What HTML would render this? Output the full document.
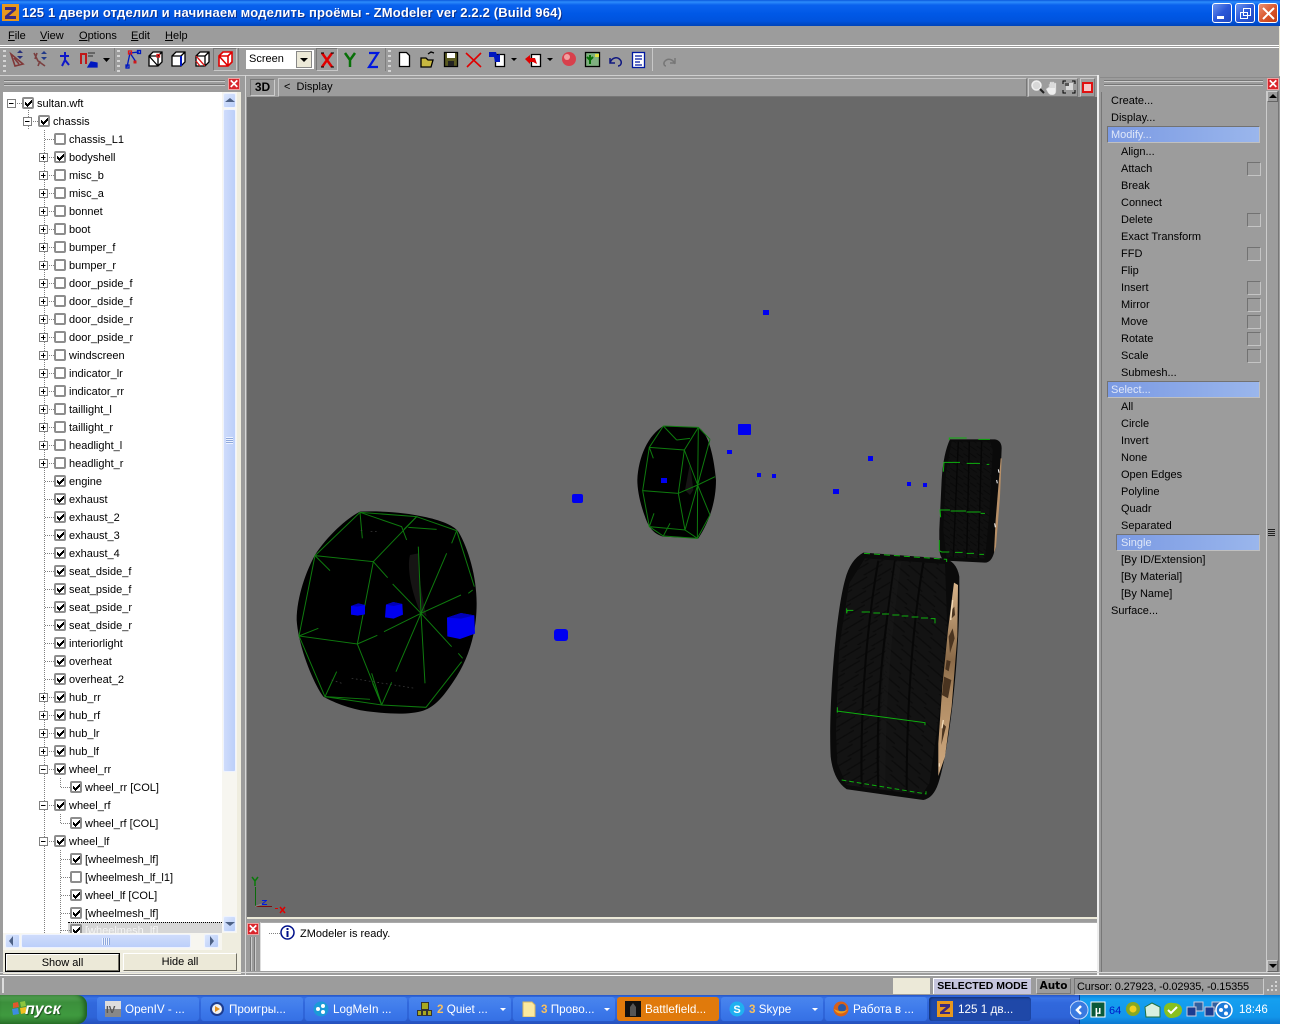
<!DOCTYPE html>
<html><head><meta charset="utf-8"><title>ZModeler</title>
<style>
html,body{margin:0;padding:0;background:#fff}
body{width:1296px;height:1024px;position:relative;overflow:hidden;font:11px "Liberation Sans","Noto Sans CJK SC",sans-serif;color:#000}
.a,.a *{box-sizing:border-box}
.a{position:absolute}
.t{position:absolute;white-space:nowrap}
#win{left:0;top:0;width:1280px;height:995px;background:#9c9c9c;overflow:hidden}
#title{left:0;top:0;width:1280px;height:26px;background:linear-gradient(#0a58dc 0,#2d8cfb 2px,#0a62ee 5px,#0058e6 14px,#0053dd 21px,#0043b8 26px)}
#title .t{left:22px;top:5px;font:bold 13px "Liberation Sans",sans-serif;letter-spacing:.16px;color:#fff;text-shadow:1px 1px 0 #0a2f8c}
.wb{position:absolute;top:3px;width:20px;height:20px;border:1px solid #fff;border-radius:3px;background:linear-gradient(135deg,#6d94ee,#2c58d8 50%,#2048c0)}
.m{position:absolute;top:30px;font-size:11px}
.m u{text-decoration:underline}
.hl{position:absolute;background:#fff;height:1px;left:0;width:1280px}
.sep{position:absolute;width:1px;background:#c8c8c8}
.grip{position:absolute;width:3px;background:repeating-linear-gradient(#d4d4d4 0 2px,transparent 2px 5px)}
#tree{left:3px;top:92px;width:219px;height:841px;background:#fff;overflow:hidden;padding-top:2px}
.r{position:relative;height:18px;line-height:20px;margin-left:-3px;--x:60px;padding-left:calc(var(--x) + 9px);white-space:nowrap}
.l0{--x:28px}.l1{--x:44px}.l3{--x:76px}
.r s{position:absolute;left:calc(var(--x) - 15px);top:9px;width:10px;height:1px;background:repeating-linear-gradient(90deg,#808080 0 1px,transparent 1px 2px)}
.r b{position:absolute;left:calc(var(--x) - 6px);top:3px;width:12px;height:12px;border:2px solid #8d8d8d;border-radius:2px;background:#fff}
.r b.y::after{content:"";position:absolute;left:0;top:0;width:1px;height:1px;color:#000;box-shadow:1px 3px,1px 4px,1px 5px,2px 4px,2px 5px,2px 6px,3px 5px,3px 6px,3px 7px,4px 4px,4px 5px,4px 6px,5px 3px,5px 4px,5px 5px,6px 2px,6px 3px,6px 4px,7px 1px,7px 2px,7px 3px}
.r i{position:absolute;left:calc(var(--x) - 21px);top:5px;width:9px;height:9px;border:1px solid #808080;background:linear-gradient(#000,#000) center/5px 1px no-repeat,#fff}
.r i.p{background:linear-gradient(#000,#000) center/5px 1px no-repeat,linear-gradient(#000,#000) center/1px 5px no-repeat,#fff}
.v{position:absolute;width:1px;background:repeating-linear-gradient(#808080 0 1px,transparent 1px 2px)}
.sb{position:absolute;background:linear-gradient(135deg,#dbe6fd,#b6cbf8);border:1px solid #eef3ff;border-radius:2px}
.btn{position:absolute;background:#ece9d8;border:1px solid #fff;border-right-color:#716f64;border-bottom-color:#716f64;text-align:center;font-size:11px;line-height:16px}
.it{position:absolute;height:17px;line-height:19px;white-space:nowrap;font-size:11px}
.band{position:absolute;height:17px;line-height:17px;color:#dfe7f8;background:linear-gradient(90deg,#7b9ae3,#9ab6ec);border:1px solid;border-color:#727272 #c0c0c0 #c0c0c0 #727272;white-space:nowrap;font-size:11px}
.cb{position:absolute;left:1247px;width:14px;height:14px;border:1px solid;border-color:#727272 #c4c4c4 #c4c4c4 #727272}
.rx{position:absolute;width:12px;height:12px;background:#d9252c;border:1px solid #f0a0a0;color:#fff;font:bold 12px/10px "Liberation Sans",sans-serif;text-align:center}
.box{position:absolute;border:1px solid;border-color:#c8c8c8 #777 #777 #c8c8c8}
#bar{left:0;top:995px;width:1280px;height:29px;background:linear-gradient(#2456c8 0,#3a74e6 3px,#3168dc 8px,#2e64d8 22px,#2550bc 29px)}
.tb{position:absolute;top:2px;height:24px;width:102px;background:linear-gradient(#4a86ee,#3c78ea 60%,#3570e4);border-radius:3px;color:#fff;font-size:11.7px;line-height:26px;white-space:nowrap}
.tb span{position:absolute;left:28px;top:0}
.tb em{font-style:normal;color:#f7c060;font-weight:bold}
.tb svg{position:absolute;left:8px;top:4px}
.dd{position:absolute;right:5px;top:11px;width:0;height:0;border:3px solid transparent;border-top:3px solid #fff;border-bottom:0}
svg{display:block}
</style></head><body>
<div id="win" class="a">
 <div id="title" class="a">
  <svg class="a" style="left:2px;top:4px" width="17" height="17"><rect width="17" height="17" fill="#e8981e"/><path d="M3 3h11v3L7 12h7v3H3v-3l7-6H3z" fill="#3a2a80"/></svg>
  <div class="t">125 1 двери отделил и начинаем моделить проёмы - ZModeler ver 2.2.2 (Build 964)</div>
  <div class="wb" style="left:1212px"><div class="a" style="left:4px;top:12px;width:7px;height:3px;background:#fff"></div></div>
  <div class="wb" style="left:1235px"><svg class="a" style="left:3px;top:3px" width="13" height="13" fill="none" stroke="#fff"><path d="M4.5 1.5h7v7h-7zM1.5 5.500h7v6h-7z"/></svg></div>
  <div class="wb" style="left:1258px;background:linear-gradient(135deg,#eb9072,#d8542a 55%,#bf3c14)"><svg class="a" style="left:3px;top:3px" width="13" height="13" stroke="#fff" stroke-width="2"><path d="M1 1l11 11M12 1L1 12"/></svg></div>
 </div>
 <div class="m" style="left:8px"><u>F</u>ile</div>
 <div class="m" style="left:40px"><u>V</u>iew</div>
 <div class="m" style="left:79px"><u>O</u>ptions</div>
 <div class="m" style="left:131px"><u>E</u>dit</div>
 <div class="m" style="left:165px"><u>H</u>elp</div>
 <div class="hl" style="top:45px"></div><div class="hl" style="top:47px"></div>
 <div class="grip" style="left:3px;top:50px;height:22px"></div>
 <div class="sep" style="left:114px;top:48px;height:23px;background:#7e7e7e"></div>
 <div class="grip" style="left:117px;top:50px;height:22px"></div>
 <div class="sep" style="left:238px;top:48px;height:23px;background:#7e7e7e"></div>
 <div class="sep" style="left:385px;top:48px;height:23px;background:#7e7e7e"></div>
 <div class="grip" style="left:388px;top:50px;height:22px"></div>
 <div class="sep" style="left:652px;top:48px;height:23px"></div>
 <div class="box" style="left:213px;top:48px;width:24px;height:23px;border-color:#777 #c8c8c8 #c8c8c8 #777"></div>
 <div class="box" style="left:316px;top:48px;width:22px;height:23px;border-color:#777 #c8c8c8 #c8c8c8 #777"></div>
 <div class="a" style="left:246px;top:50px;width:68px;height:19px;background:#fff"><div class="t" style="left:3px;top:3px;font-size:11px">Screen</div><div class="a" style="left:50px;top:1px;width:16px;height:17px;background:#ece9d8;border:1px solid #888"><div class="a" style="left:3px;top:6px;border:4px solid transparent;border-top:4px solid #000;border-bottom:0"></div></div></div>
 <svg class="a" style="left:0;top:46px" width="700" height="28">
  <g fill="none" stroke-width="1.300">
   <path d="M11 8l4 12 8-2zM14 12l5 6" stroke="#803838" stroke-width="1.600"/><path d="M17 7l3-3 3 3zM17 10l3 3 3-3z" fill="#28307a" stroke="none"/>
   <path d="M34 7l4 8 7 5M37 7l-2 6M40 15l-2 5" stroke="#7a4040" stroke-width="1.600"/><path d="M41 8l3-3 3 3zM41 11l3 3 3-3z" fill="#223a88" stroke="none"/>
   <path d="M65 6v8M65 14l-3 6M65 14l4 5M60 10h9" stroke="#1018c8" stroke-width="2"/>
   <path d="M81 7v11M86 7v11M80 8h6" stroke="#c01818" stroke-width="2"/><path d="M88 21l3-5 6 1v4z" fill="#0018c0" stroke="#0018c0"/><path d="M88 7h7M88 10h5" stroke="#444"/>
   <path d="M103 12h7l-3.500 4z" fill="#000" stroke="none"/>
   <path d="M127 21l3-14 9-1M130 7l6 9" stroke="#0018c0"/><rect x="126" y="19" width="3" height="3" stroke="#0018c0"/><rect x="128.500" y="5" width="3" height="3" stroke="#e01818"/><rect x="137.500" y="4.500" width="3" height="3" stroke="#0018c0"/><rect x="133.500" y="14.500" width="3" height="3" fill="#d01818" stroke="none"/>
   <g stroke="#000" fill="#fff"><path d="M149 10l4-4h9v10l-4 4h-9zM149 10h9v10M158 10l4-4M149 10l9 10"/></g><rect x="157" y="8.500" width="2.500" height="2.500" stroke="#e01818"/>
   <g stroke="#000" fill="#fff"><path d="M172 10l4-4h9v10l-4 4h-9zM172 10h9v10M181 10l4-4M181 10v10"/></g><path d="M181 10v10" stroke="#0018c0" stroke-width="2"/>
   <g stroke="#000" fill="#fff"><path d="M196 10l4-4h9v10l-4 4h-9zM196 10h9v10M205 10l4-4"/></g><path d="M196 10l9 10" stroke="#e01818"/><path d="M198 12l5 6M196 15l4 5" stroke="#e01818"/>
   <g stroke="#e00000" stroke-width="1.600" fill="#fff"><path d="M219 10l4-4h9v10l-4 4h-9zM219 10h9v10M228 10l4-4M219 10l9 10"/></g>
   <path d="M322 7l10 14M332 7l-10 14" stroke="#e00000" stroke-width="2.500"/><path d="M321 7h3M331 7h3M321 21h3M331 21h3" stroke="#000" stroke-width="1"/>
   <path d="M345 7l5 7 5-7M350 14v7" stroke="#087008" stroke-width="2.500"/>
   <path d="M369 7h9l-9 14h9" stroke="#0018e0" stroke-width="2.200"/>
   <path d="M399.500 6.500h7l3 3v11h-10z" fill="#fff" stroke="#000"/>
   <path d="M421 12h5l2 2h5l-2 7h-10z" fill="#c8b840" stroke="#000"/><path d="M428 8l3-2 3 1" stroke="#000"/>
   <rect x="444.500" y="6.500" width="13" height="14" fill="#5a5a20" stroke="#000"/><rect x="447" y="7" width="8" height="5" fill="#fff"/><rect x="448" y="15" width="6" height="5" fill="#222"/>
   <path d="M466 7l15 14M481 7l-14 14" stroke="#e00000" stroke-width="1.600"/>
   <path d="M495.500 8.500h9v12h-9z" fill="#fff" stroke="#000"/><path d="M489 6h7l1 3 3-1v8h-5l-1-5h-5z" fill="#0018c0"/>
   <path d="M531.500 8.500h9v12h-9z" fill="#fff" stroke="#000"/><path d="M525 13l5-4v3h5l2 6-4-2h-3v2z" fill="#e00000"/>
   <path d="M511 12h6l-3 3zM547 12h6l-3 3z" fill="#000" stroke="none"/>
   <circle cx="569" cy="13" r="7" fill="#d8404c" stroke="none"/><circle cx="567" cy="11" r="3" fill="#f0a0a0" stroke="none"/>
   <rect x="585.500" y="6.500" width="14" height="14" fill="#80b080" stroke="#000"/><path d="M590 18v-9M587 11l3 3 3-3" stroke="#087008" stroke-width="2"/><rect x="595" y="8" width="4" height="3" fill="#e0e040" stroke="none"/>
   <path d="M610 17c2-6 8-7 11-2 1 3-1 5-3 5M610 12v5h5" stroke="#101880" stroke-width="1.500"/>
   <rect x="632.500" y="6.500" width="12" height="15" fill="#fff" stroke="#0018a0"/><path d="M635 10h7M635 13h7M635 16h5M635 19h7" stroke="#0018a0"/>
   <path d="M675 18c-2-5-7-6-10-3-2 2-1 5 1 5M675 12v5h-5" stroke="#777" stroke-width="1.500"/>
  </g>
 </svg>
 <div class="hl" style="top:75px;width:1097px;background:#cfcfcf"></div>
 <div class="hl" style="top:77px;left:1100px;width:180px;background:#8a8a8a"></div>

 <!-- left panel -->
 <div class="a" style="left:4px;top:80px;width:221px;height:1px;background:#777;box-shadow:0 1px #ccc,0 4px #777,0 5px #ccc"></div>
 <div class="rx" style="left:228px;top:78px">✕</div>
 <div class="a" style="left:0;top:92px;width:241px;height:882px;background:#efeddf"></div>
 <div class="a" style="left:0;top:92px;width:3px;height:882px;background:#9c9c9c"></div>
 <div id="tree" class="a">
  <div class="v" style="left:25px;top:16px;height:22px"></div>
  <div class="v" style="left:41px;top:38px;height:803px"></div>
  <div class="v" style="left:57px;top:686px;height:10px"></div>
  <div class="v" style="left:57px;top:722px;height:10px"></div>
  <div class="v" style="left:57px;top:758px;height:83px"></div>
  <div class="r l0"><i></i><s></s><b class="y"></b>sultan.wft</div>
  <div class="r l1"><i></i><s></s><b class="y"></b>chassis</div>
  <div class="r"><s></s><b></b>chassis_L1</div>
  <div class="r"><i class="p"></i><s></s><b class="y"></b>bodyshell</div>
  <div class="r"><i class="p"></i><s></s><b></b>misc_b</div>
  <div class="r"><i class="p"></i><s></s><b></b>misc_a</div>
  <div class="r"><i class="p"></i><s></s><b></b>bonnet</div>
  <div class="r"><i class="p"></i><s></s><b></b>boot</div>
  <div class="r"><i class="p"></i><s></s><b></b>bumper_f</div>
  <div class="r"><i class="p"></i><s></s><b></b>bumper_r</div>
  <div class="r"><i class="p"></i><s></s><b></b>door_pside_f</div>
  <div class="r"><i class="p"></i><s></s><b></b>door_dside_f</div>
  <div class="r"><i class="p"></i><s></s><b></b>door_dside_r</div>
  <div class="r"><i class="p"></i><s></s><b></b>door_pside_r</div>
  <div class="r"><i class="p"></i><s></s><b></b>windscreen</div>
  <div class="r"><i class="p"></i><s></s><b></b>indicator_lr</div>
  <div class="r"><i class="p"></i><s></s><b></b>indicator_rr</div>
  <div class="r"><i class="p"></i><s></s><b></b>taillight_l</div>
  <div class="r"><i class="p"></i><s></s><b></b>taillight_r</div>
  <div class="r"><i class="p"></i><s></s><b></b>headlight_l</div>
  <div class="r"><i class="p"></i><s></s><b></b>headlight_r</div>
  <div class="r"><s></s><b class="y"></b>engine</div>
  <div class="r"><s></s><b class="y"></b>exhaust</div>
  <div class="r"><s></s><b class="y"></b>exhaust_2</div>
  <div class="r"><s></s><b class="y"></b>exhaust_3</div>
  <div class="r"><s></s><b class="y"></b>exhaust_4</div>
  <div class="r"><s></s><b class="y"></b>seat_dside_f</div>
  <div class="r"><s></s><b class="y"></b>seat_pside_f</div>
  <div class="r"><s></s><b class="y"></b>seat_pside_r</div>
  <div class="r"><s></s><b class="y"></b>seat_dside_r</div>
  <div class="r"><s></s><b class="y"></b>interiorlight</div>
  <div class="r"><s></s><b class="y"></b>overheat</div>
  <div class="r"><s></s><b class="y"></b>overheat_2</div>
  <div class="r"><i class="p"></i><s></s><b class="y"></b>hub_rr</div>
  <div class="r"><i class="p"></i><s></s><b class="y"></b>hub_rf</div>
  <div class="r"><i class="p"></i><s></s><b class="y"></b>hub_lr</div>
  <div class="r"><i class="p"></i><s></s><b class="y"></b>hub_lf</div>
  <div class="r"><i></i><s></s><b class="y"></b>wheel_rr</div>
  <div class="r l3"><s></s><b class="y"></b>wheel_rr [COL]</div>
  <div class="r"><i></i><s></s><b class="y"></b>wheel_rf</div>
  <div class="r l3"><s></s><b class="y"></b>wheel_rf [COL]</div>
  <div class="r"><i></i><s></s><b class="y"></b>wheel_lf</div>
  <div class="r l3"><s></s><b class="y"></b>[wheelmesh_lf]</div>
  <div class="r l3"><s></s><b></b>[wheelmesh_lf_l1]</div>
  <div class="r l3"><s></s><b class="y"></b>wheel_lf [COL]</div>
  <div class="r l3"><s></s><b class="y"></b>[wheelmesh_lf]</div>
  <div class="a" style="left:65px;top:830px;width:154px;height:12px;background:#d6d6d6;border-top:1px dotted #000"></div>
  <div class="r l3" style="position:absolute;top:829px;left:0;color:#f4f4f4"><s></s><b class="y"></b>[wheelmesh_lf]</div>
 </div>
 <div class="a" style="left:222px;top:92px;width:15px;height:841px;background:#f7f6f0"></div>
 <div class="sb" style="left:223px;top:93px;width:13px;height:15px"><div class="a" style="left:1px;top:4px;border:5px solid transparent;border-bottom:4px solid #4d6185;border-top:0"></div></div>
 <div class="sb" style="left:223px;top:109px;width:13px;height:663px;background:linear-gradient(90deg,#cfdcfb,#bccffa)"><div class="a" style="left:2px;top:327px;width:7px;height:7px;background:repeating-linear-gradient(#eef3ff 0 1px,#8ea8dc 1px 2px)"></div></div>
 <div class="sb" style="left:223px;top:916px;width:13px;height:16px"><div class="a" style="left:1px;top:5px;border:5px solid transparent;border-top:4px solid #4d6185;border-bottom:0"></div></div>
 <div class="a" style="left:3px;top:933px;width:219px;height:17px;background:#f7f6f0"></div>
 <div class="sb" style="left:5px;top:934px;width:15px;height:14px"><div class="a" style="left:3px;top:1px;border:5px solid transparent;border-right:4px solid #4d6185;border-left:0"></div></div>
 <div class="sb" style="left:21px;top:934px;width:170px;height:14px;background:linear-gradient(#cfdcfb,#bccffa)"><div class="a" style="left:80px;top:3px;width:8px;height:7px;background:repeating-linear-gradient(90deg,#eef3ff 0 1px,#8ea8dc 1px 2px)"></div></div>
 <div class="sb" style="left:204px;top:934px;width:15px;height:14px"><div class="a" style="left:5px;top:1px;border:5px solid transparent;border-left:4px solid #4d6185;border-right:0"></div></div>
 <div class="btn" style="left:6px;width:113px;top:954px;height:17px;outline:1px solid #000">Show all</div>
 <div class="btn" style="left:123px;width:114px;top:953px;height:18px;line-height:17px">Hide all</div>

 <!-- viewport header -->
 <div class="a" style="left:245px;top:75px;width:1px;height:900px;background:#d8d8d8"></div>
 <div class="box" style="left:250px;top:79px;width:25px;height:17px;border-color:#777 #ccc #ccc #777;font:bold 12px/15px 'Liberation Sans',sans-serif;text-align:center">3D</div>
 <div class="box" style="left:278px;top:78px;width:749px;height:19px"><div class="t" style="left:5px;top:2px;font-size:11px">&lt;&nbsp; Display</div></div>
 <div class="box" style="left:1028px;top:78px;width:50px;height:19px"></div>
 <div class="box" style="left:1080px;top:78px;width:15px;height:19px"><div class="a" style="left:1px;top:3px;width:11px;height:11px;background:#f4c8c8;border:2px solid #e01010"></div></div>
 <svg class="a" style="left:1030px;top:79px" width="46" height="16"><circle cx="6.500" cy="6.500" r="4.500" fill="#d8d8d8" stroke="#f0f0f0" stroke-width="1.500"/><path d="M10 10l4 4" stroke="#222" stroke-width="2"/><path d="M19 8v-3h1v4-6h2v6-6h2v6-5h2v8c0 3-2 4-4 4-3 0-4-2-6-6z" fill="#eee" stroke="#bbb" stroke-width=".5"/><path d="M33 5V2h3M45 5V2h-3M33 11v3h3M45 11v3h-3" stroke="#000" fill="none"/><rect x="36" y="4" width="7" height="7" fill="#d8d8d8"/><rect x="35" y="4" width="4" height="3" fill="#555"/></svg>
 <div class="a" style="left:247px;top:97px;width:850px;height:820px;background:#696969"></div>
 <div class="a" style="left:1097px;top:75px;width:2px;height:900px;background:#eee"></div>
 <div class="a" style="left:247px;top:917px;width:850px;height:2px;background:#ece9d8"></div>

 <!-- message panel -->
 <div class="rx" style="left:247px;top:923px">✕</div>
 <div class="a" style="left:250px;top:937px;width:1px;height:34px;background:#777;box-shadow:1px 0 #ccc,4px 0 #777,5px 0 #ccc"></div>
 <div class="a" style="left:260px;top:922px;width:837px;height:49px;background:#fff;border-top:1px solid #aaa;border-left:1px solid #ddd"></div>
 <div class="a" style="left:269px;top:933px;width:11px;height:1px;background:repeating-linear-gradient(90deg,#808080 0 1px,transparent 1px 2px)"></div>
 <svg class="a" style="left:280px;top:925px" width="15" height="15"><circle cx="7.500" cy="7.500" r="6.500" fill="#fff" stroke="#00108a" stroke-width="1.500"/><path d="M6.500 3h2v2h-2zM6.500 6h2v6h-2z" fill="#00108a"/></svg>
 <div class="t" style="left:300px;top:928px">ZModeler is ready.</div>
 <div class="hl" style="top:972px;background:#d8d8d8;width:1280px"></div><div class="hl" style="top:975px;width:1280px"></div>
 <div class="a" style="left:1279px;top:26px;width:1px;height:50px;background:#ece9d8"></div>

 <!-- right panel -->
 <div class="a" style="left:1104px;top:80px;width:159px;height:1px;background:#777;box-shadow:0 1px #ccc,0 4px #777,0 5px #ccc"></div>
 <div class="rx" style="left:1267px;top:78px">✕</div>
 <div class="a" style="left:1101px;top:92px;width:1px;height:880px;background:#777"></div>
 <div class="a" style="left:1266px;top:91px;width:1px;height:881px;background:#ccc"></div>
 <div class="a" style="left:1278px;top:91px;width:1px;height:881px;background:#777"></div>
 <div class="box" style="left:1267px;top:91px;width:11px;height:11px;border-color:#ccc #666 #666 #ccc"><div class="a" style="left:1px;top:2px;border:4px solid transparent;border-bottom:4px solid #000;border-top:0"></div></div>
 <div class="a" style="left:1268px;top:529px;width:7px;height:7px;background:repeating-linear-gradient(#222 0 1px,transparent 1px 2px)"></div>
 <div class="box" style="left:1267px;top:960px;width:11px;height:12px;border-color:#ccc #666 #666 #ccc"><div class="a" style="left:1px;top:3px;border:4px solid transparent;border-top:4px solid #000;border-bottom:0"></div></div>
 <div class="it" style="left:1111px;top:92px">Create...</div>
 <div class="it" style="left:1111px;top:109px">Display...</div>
 <div class="band" style="left:1107px;top:126px;width:153px;padding-left:3px">Modify...</div>
 <div class="it" style="left:1121px;top:143px">Align...</div>
 <div class="it" style="left:1121px;top:160px">Attach</div><div class="cb" style="top:162px"></div>
 <div class="it" style="left:1121px;top:177px">Break</div>
 <div class="it" style="left:1121px;top:194px">Connect</div>
 <div class="it" style="left:1121px;top:211px">Delete</div><div class="cb" style="top:213px"></div>
 <div class="it" style="left:1121px;top:228px">Exact Transform</div>
 <div class="it" style="left:1121px;top:245px">FFD</div><div class="cb" style="top:247px"></div>
 <div class="it" style="left:1121px;top:262px">Flip</div>
 <div class="it" style="left:1121px;top:279px">Insert</div><div class="cb" style="top:281px"></div>
 <div class="it" style="left:1121px;top:296px">Mirror</div><div class="cb" style="top:298px"></div>
 <div class="it" style="left:1121px;top:313px">Move</div><div class="cb" style="top:315px"></div>
 <div class="it" style="left:1121px;top:330px">Rotate</div><div class="cb" style="top:332px"></div>
 <div class="it" style="left:1121px;top:347px">Scale</div><div class="cb" style="top:349px"></div>
 <div class="it" style="left:1121px;top:364px">Submesh...</div>
 <div class="band" style="left:1107px;top:381px;width:153px;padding-left:3px">Select...</div>
 <div class="it" style="left:1121px;top:398px">All</div>
 <div class="it" style="left:1121px;top:415px">Circle</div>
 <div class="it" style="left:1121px;top:432px">Invert</div>
 <div class="it" style="left:1121px;top:449px">None</div>
 <div class="it" style="left:1121px;top:466px">Open Edges</div>
 <div class="it" style="left:1121px;top:483px">Polyline</div>
 <div class="it" style="left:1121px;top:500px">Quadr</div>
 <div class="it" style="left:1121px;top:517px">Separated</div>
 <div class="band" style="left:1116px;top:534px;width:144px;padding-left:4px">Single</div>
 <div class="it" style="left:1121px;top:551px">[By ID/Extension]</div>
 <div class="it" style="left:1121px;top:568px">[By Material]</div>
 <div class="it" style="left:1121px;top:585px">[By Name]</div>
 <div class="it" style="left:1111px;top:602px">Surface...</div>

 <!-- status -->
 <div class="a" style="left:2px;top:978px;width:2px;height:15px;background:#ddd"></div>
 <div class="a" style="left:893px;top:978px;width:37px;height:16px;background:#ece9d8"></div>
 <div class="a" style="left:933px;top:978px;width:98px;height:16px;background:#c6c6de;border-left:1px solid #fff;border-top:1px solid #fff;text-align:center;font:bold 10.5px/15px 'Liberation Sans',sans-serif;white-space:nowrap">SELECTED MODE</div>
 <div class="a" style="left:1036px;top:978px;width:35px;height:16px;border:1px solid;border-color:#ccc #777 #777 #ccc;text-align:center;font:bold 10.5px/14px 'DejaVu Sans',sans-serif">Auto</div>
 <div class="a" style="left:1074px;top:978px;width:190px;height:17px;border:1px solid;border-color:#777 #ccc #ccc #777;font-size:11px;letter-spacing:-.17px;line-height:16px;padding-left:2px;white-space:nowrap">Cursor: 0.27923, -0.02935, -0.15355</div>
 <svg class="a" style="left:1264px;top:978px" width="16" height="17" fill="#d4d4d4"><path d="M11 3h2v2h-2zM7 7h2v2H7zM11 7h2v2h-2zM3 11h2v2H3zM7 11h2v2H7zM11 11h2v2h-2z"/></svg>
</div>

<!-- 3D scene -->
<svg class="a" style="left:0;top:0" width="1280" height="995" viewBox="0 0 1280 995">
 <defs>
  <pattern id="tr" width="42" height="42" patternUnits="userSpaceOnUse" patternTransform="rotate(5)"><rect width="42" height="42" fill="#131313"/><path d="M0 4l42 30M0-26l42 30" stroke="#0b0b0b" stroke-width="4"/></pattern>
  <pattern id="tl" width="42" height="42" patternUnits="userSpaceOnUse" patternTransform="rotate(5)"><rect width="42" height="42" fill="#131313"/><path d="M0 34L42 4M0 64L42 34" stroke="#0b0b0b" stroke-width="4"/></pattern>
  <pattern id="ts" width="20" height="22" patternUnits="userSpaceOnUse"><rect width="20" height="22" fill="#101010"/><path d="M0 4l20 14" stroke="#090909" stroke-width="3"/></pattern>
  <linearGradient id="rim" x1="0" x2="0" y1="0" y2="1"><stop offset="0" stop-color="#d8b48a"/><stop offset=".4" stop-color="#8a6a48"/><stop offset=".6" stop-color="#b08c64"/><stop offset="1" stop-color="#d0aa80"/></linearGradient>
 </defs>
 <!-- left wheel -->
 <g transform="translate(280 490) scale(.3333)">
  <path d="M240 65C300 62 380 68 430 80C480 90 520 105 535 125C565 175 590 260 590 340C590 430 565 510 520 575C490 620 465 650 430 662C390 675 330 672 270 665C220 660 165 640 130 620C100 580 55 470 50 390C50 320 80 240 105 195C140 140 200 85 240 65Z" fill="#000"/>
  <path d="M390 195c-10 40 5 110 30 170l20 15c-15-60-25-130-25-190z" fill="#161414"/>
  <g fill="none" stroke="#0e7a0e" stroke-width="3">
   <path d="M105 197L280 215 232 462 57 438 105 197 240 67 410 80 280 215M410 80L530 122 583 290M232 462L305 645 135 620 57 438M305 645L438 652 545 515M578 300L565 310M535 490L548 505"/>
   <path d="M415 170L423 370 435 580M500 190L423 370 348 545M543 315L423 370 312 425M292 436L232 462M338 282L423 370 515 470M280 215L323 263M135 620L170 545M57 438L115 415M105 197L150 242M240 67L247 145M240 67L365 110 380 150M372 118L410 80M530 122L515 160M305 645L335 577M305 645L275 550M135 620L270 628M305 645L278 580M385 112L470 118"/>
  </g>
  <path d="M242 122h10M272 124h18M155 570l30 10M215 565l190 30" stroke="#444" stroke-width="2" stroke-dasharray="5 8"/>
  <path d="M213 348l22-8 20 5v28l-22 4-20-3z" fill="#0000f0"/><path d="M213 348l22-8 20 5-22 5z" fill="#0000b8"/>
  <path d="M318 344l22-8 27 6 2 32-28 12-26-4z" fill="#0000f0"/><path d="M318 344l22-8 27 6-26 6z" fill="#0000b8"/>
  <path d="M501 383l42-14 40 7 2 55-45 16-38-8z" fill="#0000f0"/><path d="M501 383l42-14 40 7-40 10z" fill="#0000b8"/>
 </g>
 <!-- middle wheel -->
 <g transform="translate(620 410) scale(.3333)">
  <path d="M130 48L235 52C260 65 280 120 288 210C288 280 265 340 235 385L130 380C100 372 85 350 75 320C60 280 52 240 52 210C55 140 85 75 130 48Z" fill="#000"/>
  <path d="M210 160l-15 80 15 15 10-15z" fill="#161414"/>
  <g fill="none" stroke="#0e7a0e" stroke-width="3">
   <path d="M130 48L235 52 270 88M88 112L193 120 175 250 68 242 88 112 130 48M193 120L235 52M175 250L195 360 88 350 68 242M195 360L232 385 270 315M88 350L130 378 232 385"/>
   <path d="M235 52L233 225 232 385M270 88L233 225 270 315M285 200L233 225 175 250M193 120L233 225 195 360M130 48L170 90M88 112L100 145M88 350L102 310M130 378L150 340M170 90L210 85"/>
  </g>
  <rect x="123" y="204" width="18" height="15" fill="#0000f0"/>
 </g>
 <!-- right wheels -->
 <g transform="translate(810 430) scale(.3333)">
  <path d="M420 28L555 28Q575 32 575 55L572 130 560 280 553 365Q545 398 525 398L405 392Q388 385 388 350L388 300 395 150Q400 70 420 28Z" fill="#0a0a0a"/>
  <path d="M425 35L540 35 548 60 538 250 525 385 410 382 400 300 408 130z" fill="url(#ts)"/>
  <path d="M445 35L430 382M478 35L470 385M515 35L505 385" stroke="#060606" stroke-width="4" fill="none"/>
  <path d="M572 85L575 85 570 200 558 350 552 368 557 270z" fill="#b89068"/><path d="M565 118l2 10M560 150l2 10M554 280l2 12" stroke="#fff" stroke-width="3"/>
  <g fill="none" stroke="#0eb00e" stroke-width="3">
   <path d="M418 30V24H470M505 28H540M400 125L402 97H450M470 100H510M530 103H538M392 262L390 240H420M422 243H468M470 246H512M512 250H525M388 330V362L395 366H418M435 367H458M470 370H492M508 373H522"/>
  </g>
  <path d="M160 368L400 385Q440 392 448 440L448 520C445 700 420 950 385 1060Q370 1105 340 1110L110 1078Q70 1050 62 980C55 850 75 560 105 450Q120 390 160 368Z" fill="#0a0a0a"/>
  <path d="M165 385L405 402 412 600 388 850 358 1060 335 1095 110 1065 82 1000 78 900 88 650 118 460z" fill="url(#tr)"/>
  <path d="M165 385L245 392 205 1075 110 1065 82 1000 78 900 88 650 118 460z" fill="url(#tl)"/>
  <path d="M205 392C175 560 150 800 155 1070M255 392C225 600 195 800 205 1075M340 398C305 600 290 850 290 1085" fill="none" stroke="#070707" stroke-width="6"/>
  <path d="M265 395C235 600 215 850 218 1078" fill="none" stroke="#1a1a1a" stroke-width="18" opacity=".5"/>
  <path d="M432 458L444 465 442 620 425 830 405 980 385 1038 385 940 397 770 414 600z" fill="url(#rim)"/>
  <path d="M416 620l12-25 6 30-14 45zM402 740l22 10-10 55-18-10zM398 880l10 10-14 55zM425 540l8-10 2 25-10 10zM410 690l12 4-6 30-10-6z" fill="#4a3420"/><path d="M428 510l-6 60M388 1000v10M400 870l-4 25" stroke="#f4dcb8" stroke-width="4"/>
  <g fill="none" stroke="#0eb00e" stroke-width="3">
   <path d="M110 535V550L112 541H130M155 546H180M190 549H210M216 552H237M247 555H268M275 558H295M305 561H325M333 564H354M362 566H375V580"/>
   <path d="M82 832V848M80 843L345 878V886"/>
   <path d="M95 1050L348 1092V1084" stroke-dasharray="14 9"/>
   <path d="M162 370L410 388V396" stroke-dasharray="18 12"/>
  </g>
 </g>
 <!-- blue points -->
 <g fill="#0000f0">
  <rect x="763" y="310" width="6" height="5"/><rect x="738" y="424" width="13" height="11" rx="1"/><rect x="727" y="450" width="5" height="4"/><rect x="757" y="473" width="4" height="4"/><rect x="772" y="474" width="4" height="4"/><rect x="868" y="456" width="5" height="5"/><rect x="833" y="489" width="6" height="5"/><rect x="907" y="482" width="4" height="4"/><rect x="923" y="483" width="4" height="4"/><rect x="572" y="494" width="11" height="9" rx="2"/><rect x="554" y="629" width="14" height="12" rx="3"/>
 </g>
 <!-- axes -->
 <path d="M255.500 887V906" stroke="#0a6a0a"/><path d="M255 906.500H272" stroke="#7a1010"/><path d="M255 906.500l8-3" stroke="#888"/><path d="M262 901.500h5M262 905.500h5M266 902l-4 3" stroke="#0018e0" fill="none" transform="translate(0 -1)"/>
 <path d="M280 907l5 6M285 907l-5 6" stroke="#e00000" stroke-width="1.500"/><path d="M252 877l3 4 3-4M255 881v5" stroke="#0a7a0a" stroke-width="1.500" fill="none"/><rect x="275" y="908" width="3" height="1" fill="#d00"/>
</svg>

<!-- taskbar -->
<div id="bar" class="a">
 <div class="a" style="left:0;top:0;width:87px;height:29px;background:linear-gradient(#5aa85a,#3c8f3c 25%,#3f9a3f 70%,#2f7a2f);border-radius:0 10px 10px 0;box-shadow:inset -3px 0 4px #1f5f1f"></div>
 <svg class="a" style="left:11px;top:5px" width="16" height="17"><path d="M2 3l5-1 1 5-6 1z" fill="#e0572c"/><path d="M9 2l5-1 1 5-5 1z" fill="#8cc63e"/><path d="M1 9l6-1 1 6-6 1z" fill="#3c8ce0"/><path d="M9 8l6-1 0 6-5 1z" fill="#f0c020"/></svg>
 <div class="t" style="left:25px;top:6px;font:italic bold 16px 'Liberation Sans',sans-serif;color:#fff;text-shadow:1px 1px 1px #1c4c1c">пуск</div>

 <div class="tb" style="left:97px"><svg width="16" height="16"><rect width="16" height="16" fill="#ddd"/><rect y="8" width="16" height="8" fill="#888"/><text x="1" y="12" font-size="10" font-weight="bold" fill="#555" font-family="Liberation Sans">IV</text></svg><span>OpenIV - ...</span></div>
 <div class="tb" style="left:201px"><svg width="16" height="16"><circle cx="8" cy="8" r="7" fill="#1c3c90"/><circle cx="8" cy="8" r="5" fill="#f0f0f0"/><path d="M6 5l5 3-5 3z" fill="#e09020"/></svg><span>Проигры...</span></div>
 <div class="tb" style="left:305px"><svg width="16" height="16"><circle cx="8" cy="8" r="7.500" fill="#1c9ad8"/><circle cx="5" cy="8" r="2" fill="#fff"/><circle cx="10" cy="5" r="2" fill="#fff"/><circle cx="10" cy="11" r="2" fill="#fff"/></svg><span>LogMeIn ...</span></div>
 <div class="tb" style="left:409px"><svg width="16" height="16" fill="#a8a820" stroke="#333"><rect x="4.500" y="1.500" width="7" height="7"/><rect x=".500" y="9.500" width="4" height="5"/><rect x="5.500" y="9.500" width="4" height="5"/><rect x="10.500" y="9.500" width="4" height="5"/></svg><span><em>2</em> Quiet ...</span><div class="dd"></div></div>
 <div class="tb" style="left:513px"><svg width="16" height="16"><path d="M2 1h9l3 3v12H2z" fill="#fbe9a0" stroke="#d8b860"/></svg><span><em>3</em> Прово...</span><div class="dd"></div></div>
 <div class="tb" style="left:617px;background:#e07a0c"><svg width="16" height="16"><rect width="16" height="16" fill="#111"/><path d="M5 15V6l3-4 3 4v9z" fill="#555"/></svg><span>Battlefield...</span></div>
 <div class="tb" style="left:721px"><svg width="16" height="16"><circle cx="8" cy="8" r="7.500" fill="#20b0f0"/><text x="8" y="12" font-size="11" font-weight="bold" fill="#fff" text-anchor="middle" font-family="Liberation Sans">S</text></svg><span><em>3</em> Skype</span><div class="dd"></div></div>
 <div class="tb" style="left:825px"><svg width="16" height="16"><circle cx="8" cy="8" r="7.500" fill="#d86018"/><circle cx="9" cy="7" r="4" fill="#2858a8"/><path d="M1 8c3 6 10 6 14 0-3 3-9 3-14 0z" fill="#f0a020"/></svg><span>Работа в ...</span></div>
 <div class="tb" style="left:929px;background:#1f48a8;box-shadow:inset 1px 1px 2px #123070"><svg width="16" height="16"><rect width="16" height="16" fill="#e8981e"/><path d="M3 3h10v3L7 11h6v2H3v-2l6-5H3z" fill="#3a2a80"/></svg><span style="left:29px">125 1 дв...</span></div>

 <div class="a" style="left:1079px;top:0;width:201px;height:29px;background:linear-gradient(#0c7fd8,#14a0f0 4px,#1295ea 22px,#0c78d0);border-left:1px solid #0a3a90"></div>
 <svg class="a" style="left:1070px;top:4px" width="190" height="22">
  <circle cx="9" cy="11" r="9" fill="#3a7ae0" stroke="#c8dcfc"/><path d="M11 7l-4 4 4 4" stroke="#fff" stroke-width="2.500" fill="none"/>
  <rect x="21" y="3" width="14" height="15" fill="#0a5a3a" stroke="#fff"/><text x="28" y="15" font-size="11" font-weight="bold" fill="#fff" text-anchor="middle" font-family="Liberation Sans">µ</text>
  <text x="39" y="15" font-size="11" fill="#0018c8" font-family="Liberation Sans">64</text>
  <circle cx="63" cy="10" r="7" fill="#88a820"/><circle cx="63" cy="10" r="3.500" fill="#f0d020"/>
  <path d="M75 8l7-4 8 4v10H76z" fill="#d8f0e0" stroke="#207040"/>
  <path d="M94 10c0-5 5-7 9-6 6 0 9 3 9 7 0 6-6 8-11 8-4 0-7-4-7-9z" fill="#88c020"/><path d="M98 11l3 3 6-6" stroke="#fff" stroke-width="2" fill="none"/>
  <rect x="124" y="3" width="9" height="9" fill="#3060a0" stroke="#ccd"/><rect x="117" y="8" width="9" height="9" fill="#1c3c90" stroke="#ccd"/>
  <rect x="142" y="3" width="9" height="9" fill="#3060a0" stroke="#ccd"/><rect x="135" y="8" width="9" height="9" fill="#1c3c90" stroke="#ccd"/>
  <circle cx="154" cy="11" r="8" fill="#1c7ad8" stroke="#fff" stroke-width="1.500"/><circle cx="151" cy="11" r="2" fill="#fff"/><circle cx="156" cy="7.500" r="2" fill="#fff"/><circle cx="156" cy="14.500" r="2" fill="#fff"/>
 </svg>
 <div class="t" style="left:1239px;top:9px;color:#fff;font-size:11.500px">18:46</div>
</div>
</body></html>
